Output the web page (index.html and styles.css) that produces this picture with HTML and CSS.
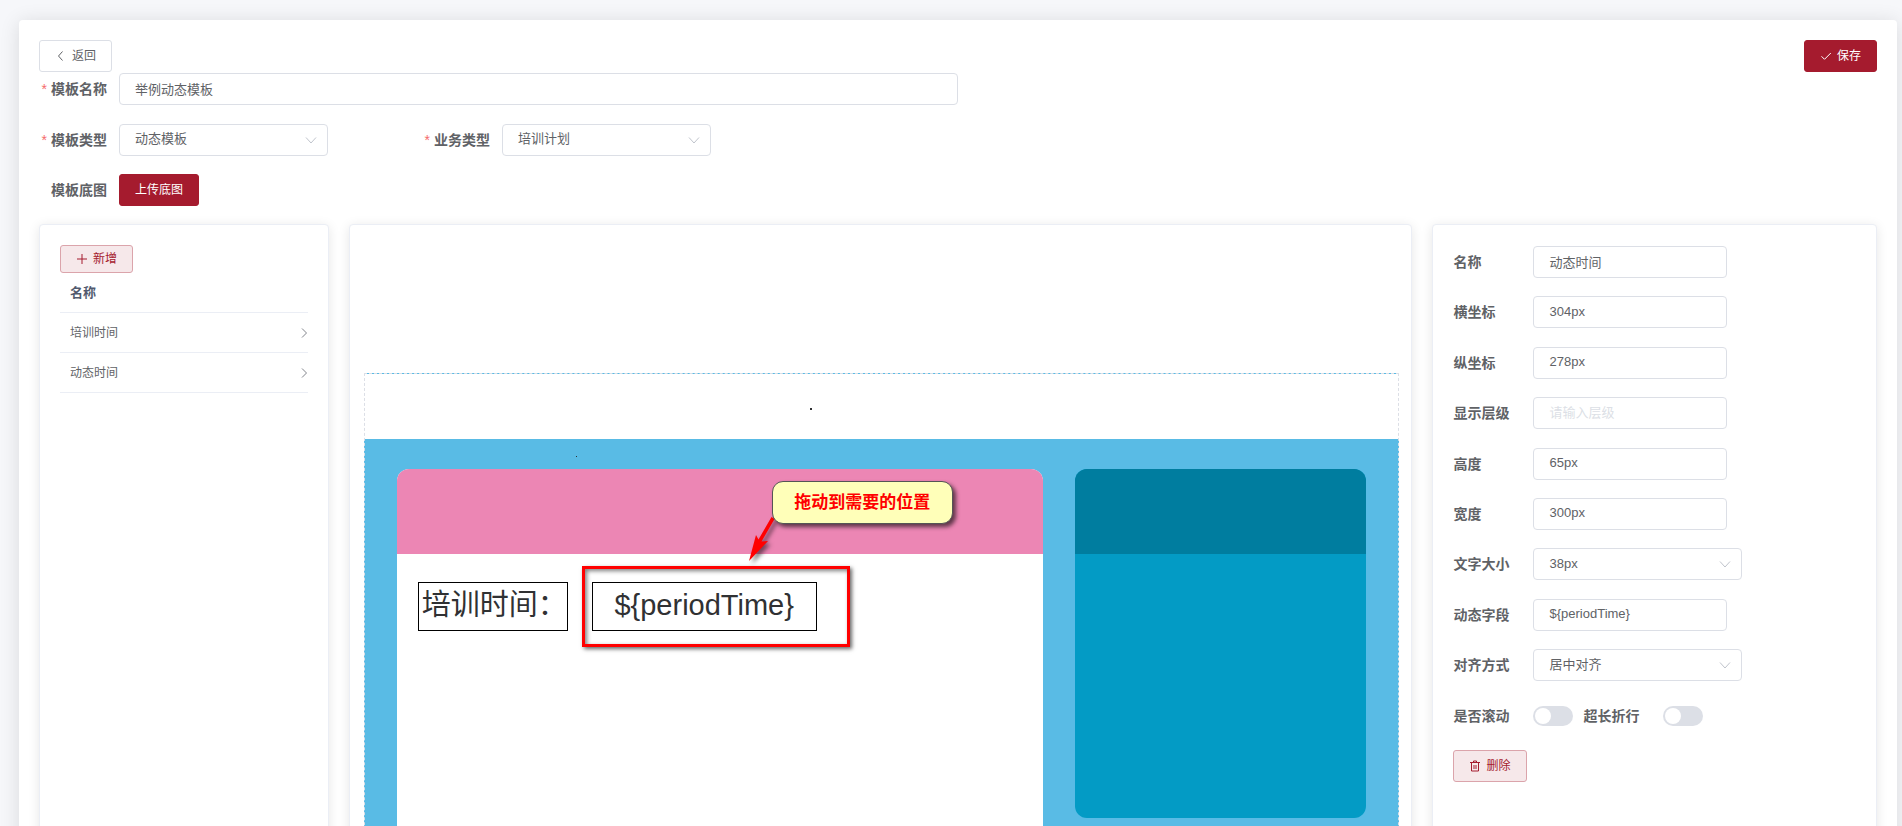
FILE: index.html
```
<!DOCTYPE html>
<html lang="zh-CN">
<head>
    <meta charset="UTF-8">
    <meta name="viewport" content="width=device-width, initial-scale=1.0">
    <title>模板编辑</title>
    <link rel="stylesheet" href="styles.css">
</head>
<body>
    <main class="page">
        <div class="card">
            <div class="toolbar">
                <button type="button" class="btn">
                    <svg class="icon" viewBox="0 0 12 12"><path d="M7.500 1.500 3.500 6l4 4.500"/></svg>
                    返回
                </button>
                <button type="button" class="btn btn-primary">
                    <svg class="icon" viewBox="0 0 12 12"><path d="M1.500 6.300 4.500 9.300 10.800 3"/></svg>
                    保存
                </button>
            </div>

            <form class="base-form">
                <div class="form-item">
                    <label class="required" for="tplName">模板名称</label>
                    <input type="text" id="tplName" value="举例动态模板">
                </div>
                <div class="form-row">
                    <div class="form-item">
                        <label class="required" for="tplType">模板类型</label>
                        <div class="select">
                            <select id="tplType"><option>动态模板</option></select>
                            <svg class="arrow" viewBox="0 0 12 12"><path d="M1 3.500 6 9l5-5.500"/></svg>
                        </div>
                    </div>
                    <div class="form-item">
                        <label class="required" for="bizType">业务类型</label>
                        <div class="select">
                            <select id="bizType"><option>培训计划</option></select>
                            <svg class="arrow" viewBox="0 0 12 12"><path d="M1 3.500 6 9l5-5.500"/></svg>
                        </div>
                    </div>
                </div>
                <div class="form-item">
                    <label for="upload">模板底图</label>
                    <button type="button" id="upload" class="btn btn-primary">上传底图</button>
                </div>
            </form>

            <div class="columns">
                <section class="panel panel-list">
                    <button type="button" class="btn btn-plain btn-mini">
                        <svg class="icon" viewBox="0 0 12 12"><path d="M6 1v10M1 6h10"/></svg>
                        新增
                    </button>
                    <table class="list">
                        <thead>
                            <tr><th colspan="2">名称</th></tr>
                        </thead>
                        <tbody>
                            <tr>
                                <td>培训时间</td>
                                <td class="more"><svg class="icon" viewBox="0 0 12 12"><path d="M6 1.500 10.500 6 6 10.500"/></svg></td>
                            </tr>
                            <tr>
                                <td>动态时间</td>
                                <td class="more"><svg class="icon" viewBox="0 0 12 12"><path d="M6 1.500 10.500 6 6 10.500"/></svg></td>
                            </tr>
                        </tbody>
                    </table>
                </section>

                <section class="panel panel-canvas">
                    <div class="canvas">
                        <div class="canvas-body">
                            <div class="block block-main"><div class="block-head"></div></div>
                            <div class="block block-side"><div class="block-head"></div></div>
                        </div>
                        <span class="dot dot-top"></span>
                        <span class="dot dot-small"></span>
                        <div class="item item-label">培训时间：</div>
                        <div class="item item-time">${periodTime}</div>
                        <div class="highlight"></div>
                        <svg class="pointer" viewBox="0 0 40 56">
                            <path d="M26.500 9 13.500 31.500 11 27 4 53 23 33 16.500 33.500 29.500 11z"/>
                        </svg>
                        <div class="callout">拖动到需要的位置</div>
                    </div>
                </section>

                <section class="panel panel-props">
                    <form class="props">
                        <div class="form-item">
                            <label for="name">名称</label>
                            <input type="text" id="name" value="动态时间">
                        </div>
                        <div class="form-item">
                            <label for="posX">横坐标</label>
                            <input type="text" id="posX" value="304px">
                        </div>
                        <div class="form-item">
                            <label for="posY">纵坐标</label>
                            <input type="text" id="posY" value="278px">
                        </div>
                        <div class="form-item">
                            <label for="level">显示层级</label>
                            <input type="text" id="level" placeholder="请输入层级">
                        </div>
                        <div class="form-item">
                            <label for="itemHeight">高度</label>
                            <input type="text" id="itemHeight" value="65px">
                        </div>
                        <div class="form-item">
                            <label for="itemWidth">宽度</label>
                            <input type="text" id="itemWidth" value="300px">
                        </div>
                        <div class="form-item">
                            <label for="fontSize">文字大小</label>
                            <div class="select">
                                <select id="fontSize"><option>38px</option></select>
                                <svg class="arrow" viewBox="0 0 12 12"><path d="M1 3.500 6 9l5-5.500"/></svg>
                            </div>
                        </div>
                        <div class="form-item">
                            <label for="field">动态字段</label>
                            <input type="text" id="field" value="${periodTime}">
                        </div>
                        <div class="form-item">
                            <label for="align">对齐方式</label>
                            <div class="select">
                                <select id="align"><option>居中对齐</option></select>
                                <svg class="arrow" viewBox="0 0 12 12"><path d="M1 3.500 6 9l5-5.500"/></svg>
                            </div>
                        </div>
                        <div class="form-item">
                            <label for="scroll">是否滚动</label>
                            <input type="checkbox" class="switch" id="scroll">
                            <label for="wrap">超长折行</label>
                            <input type="checkbox" class="switch" id="wrap">
                        </div>
                        <div class="form-item">
                            <button type="button" class="btn btn-plain">
                                <svg class="icon" viewBox="0 0 12 12"><path d="M1 2.500h10M2.500 2.500v8.500h7V2.500M4.500 2.500V1h3v1.500M5 5v4M7 5v4"/></svg>
                                删除
                            </button>
                        </div>
                    </form>
                </section>
            </div>
        </div>
    </main>
</body>
</html>
```
FILE: styles.css
```
* {
    box-sizing: border-box;
}
body {
    margin: 0;
    font-family: "Liberation Sans", "Noto Sans CJK SC", sans-serif;
    font-size: 13px;
    color: #606266;
    background: #f6f7fa;
}
input,
select,
button {
    font-family: inherit;
    color: inherit;
}
.page {
    height: 100vh;
    padding: 20px 5px 0 19px;
    overflow: auto;
    scrollbar-width: none;
}
.card {
    padding: 20px;
    background: #fff;
    border-radius: 4px;
    box-shadow: 0 2px 20px rgba(0, 0, 0, 0.12);
}
.toolbar {
    display: flex;
    justify-content: space-between;
    margin-bottom: 1px;
}

/* buttons */
.btn {
    display: inline-flex;
    align-items: center;
    gap: 5px;
    height: 32px;
    padding: 0 15px;
    border: 1px solid #dcdfe6;
    border-radius: 3px;
    background: #fff;
    font-size: 12px;
    line-height: 12px;
    cursor: pointer;
}
.btn-primary {
    background: #a51b2e;
    border-color: #a51b2e;
    color: #fff;
}
.btn-plain {
    background: #f6e8ea;
    border-color: #dba4ab;
    color: #a51b2e;
}
.btn-mini {
    height: 28px;
}
.icon {
    width: 12px;
    height: 12px;
    fill: none;
    stroke: currentColor;
    stroke-width: 1;
}

/* forms */
.base-form {
    display: flex;
    flex-direction: column;
    justify-content: space-between;
    width: 50%;
    height: 133px;
    margin-bottom: 18px;
}
.form-row {
    display: grid;
    grid-template-columns: 5fr 5fr 2fr;
}
.form-item {
    display: flex;
    align-items: center;
    height: 32px;
}
.form-item label {
    flex: none;
    width: 80px;
    padding: 0 12px 2px 0;
    font-size: 14px;
    font-weight: bold;
}
.base-form label {
    text-align: right;
}
.required::before {
    content: "*";
    margin-right: 4px;
    color: #f56c6c;
    font-weight: normal;
}
input[type="text"],
select {
    width: 100%;
    height: 32px;
    padding: 0 15px 2px;
    border: 1px solid #dcdfe6;
    border-radius: 4px;
    background: #fff;
    font-size: 13px;
    outline: none;
}
input::placeholder {
    color: #dcdfe6;
}
select {
    appearance: none;
}
.select {
    position: relative;
    flex: none;
    width: 209px;
}
.arrow {
    position: absolute;
    top: 10px;
    right: 11px;
    width: 12px;
    height: 12px;
    fill: none;
    stroke: #c0c4cc;
    pointer-events: none;
}
.switch {
    appearance: none;
    width: 40px;
    height: 20px;
    margin: 0;
    padding: 2px;
    border-radius: 10px;
    background: #dcdfe6;
}
.switch::before {
    content: "";
    display: block;
    width: 16px;
    height: 16px;
    border-radius: 50%;
    background: #fff;
}
.switch:checked {
    background: #a51b2e;
}
.switch:checked::before {
    margin-left: 20px;
}

/* three panels */
.columns {
    display: grid;
    grid-template-columns: 4fr 14fr 6fr;
    margin: 0 -10px;
}
.panel {
    min-width: 0;
    margin: 0 10px;
    padding: 20px;
    border: 1px solid #ebeef5;
    border-radius: 4px;
    background: #fff;
    box-shadow: 0 2px 12px rgba(0, 0, 0, 0.1);
}
.btn-mini {
    vertical-align: top;
}
.list {
    width: 100%;
    border-spacing: 0;
}
.list th,
.list td {
    height: 40px;
    padding: 0 10px 2px;
    border-bottom: 1px solid #ebeef5;
    text-align: left;
    font-size: 12px;
}
.list th {
    font-size: 13px;
    color: #515a6e;
}
.list .more {
    width: 24px;
    padding: 0;
}
.more .icon {
    display: block;
    margin-left: auto;
    stroke: #82858c;
}

/* template canvas */
.panel-canvas {
    padding: 148px 12px 20px 14px;
}
.canvas {
    position: relative;
    padding-top: 65px;
    border: 1px dashed #dcdfe6;
    background: linear-gradient(#59bbe5 1px, #fff 1px, #fff 66px, #59bbe5 66px) border-box;
}
.canvas-body {
    display: flex;
    gap: 32px;
    padding: 30px 32px;
}
.block {
    border-radius: 12px;
    overflow: hidden;
}
.block-main {
    flex: 646;
    height: 460px;
    background: #fff;
}
.block-side {
    flex: 291;
    height: 349px;
    background: #039bc5;
}
.block-head {
    height: 85px;
    background: #ec86b4;
}
.block-side .block-head {
    background: #007d9f;
}
.dot {
    position: absolute;
    background: #303133;
}
.dot-top {
    top: 34px;
    left: 445px;
    width: 2px;
    height: 2px;
}
.dot-small {
    top: 82px;
    left: 211px;
    width: 1px;
    height: 1px;
}
.item {
    position: absolute;
    top: 208px;
    height: 49px;
    border: 1px solid #000;
    font-size: 29px;
    line-height: 44px;
    color: #303133;
    white-space: nowrap;
    overflow: hidden;
}
.item-label {
    left: 53px;
    width: 150px;
    padding-left: 3px;
}
.item-time {
    left: 227px;
    width: 225px;
    text-align: center;
}
.highlight {
    position: absolute;
    top: 192px;
    left: 217px;
    width: 268px;
    height: 81px;
    border: 3px solid #f00;
    box-shadow: 2px 2px 4px rgba(0, 0, 0, 0.6), inset 2px 2px 4px rgba(0, 0, 0, 0.5);
}
.callout {
    position: absolute;
    top: 107px;
    left: 407px;
    width: 181px;
    height: 43px;
    border: 1px solid #555;
    border-radius: 11px;
    background: #ffffb9;
    box-shadow: 3px 3px 4px rgba(0, 0, 0, 0.6);
    font-size: 17px;
    font-weight: bold;
    line-height: 41px;
    text-align: center;
    color: #f00;
}
.pointer {
    position: absolute;
    top: 134px;
    left: 380px;
    width: 40px;
    height: 56px;
    fill: #f00;
    filter: drop-shadow(3px 3px 2px rgba(0, 0, 0, 0.5));
}

/* item properties */
.panel-props {
    padding-top: 21px;
}
.props {
    display: flex;
    flex-direction: column;
    justify-content: space-between;
    height: 536px;
}
.props input[type="text"] {
    width: 194px;
}
.switch + label {
    margin-left: 10px;
}
```
